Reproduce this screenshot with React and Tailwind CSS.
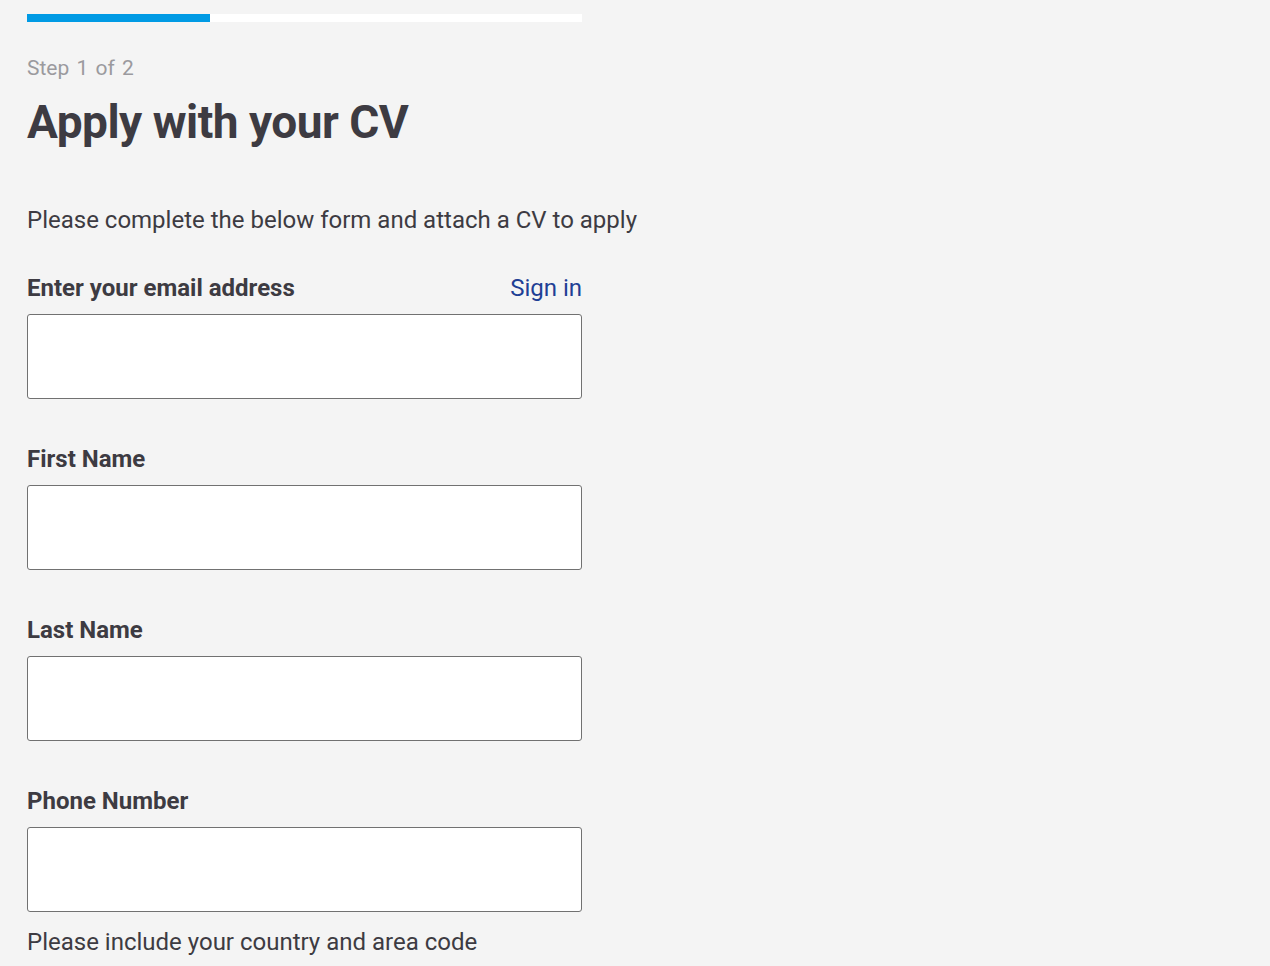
const fields = [
  { id: 'email', label: 'Enter your email address', type: 'email', signIn: true },
  { id: 'firstName', label: 'First Name', type: 'text' },
  { id: 'lastName', label: 'Last Name', type: 'text' },
  { id: 'phone', label: 'Phone Number', type: 'tel', hint: 'Please include your country and area code' },
]

export default function App() {
  return (
    <div className="min-h-screen bg-[#f4f4f4] font-['Roboto',sans-serif] text-[#3d3b42]">
      <div className="w-[555px] ml-[27px] pt-[14px]">
        {/* progress */}
        <div className="flex h-2 w-full bg-white">
          <div className="h-full w-[183px] bg-[#009ae4]" />
        </div>

        <p className="mt-8 text-[21px] leading-[28px] text-[#9b9a9e] [word-spacing:2px]">Step 1 of 2</p>
        <h1 className="mt-[13px] text-[46px] font-bold leading-[55px] whitespace-nowrap tracking-[-0.5px]">
          Apply with your CV
        </h1>

        <p className="mt-[54px] text-[24px] leading-[32px] whitespace-nowrap">
          Please complete the below form and attach a CV to apply
        </p>

        <form className="mt-[36px] flex flex-col gap-[44px]">
          {fields.map((field) => (
            <div key={field.id}>
              <div className="flex items-center justify-between">
                <label htmlFor={field.id} className="text-[24px] font-bold leading-[32px]">
                  {field.label}
                </label>
                {field.signIn && (
                  <a href="#" className="text-[24px] leading-[32px] text-[#1f3f95]">
                    Sign in
                  </a>
                )}
              </div>
              <input
                id={field.id}
                type={field.type}
                className="mt-[10px] block h-[85px] w-full rounded-[3px] border border-[#717171] bg-white px-4 text-[22px] outline-none"
              />
              {field.hint && <p className="mt-[14px] text-[24px] leading-[32px]">{field.hint}</p>}
            </div>
          ))}
        </form>
      </div>
    </div>
  )
}
